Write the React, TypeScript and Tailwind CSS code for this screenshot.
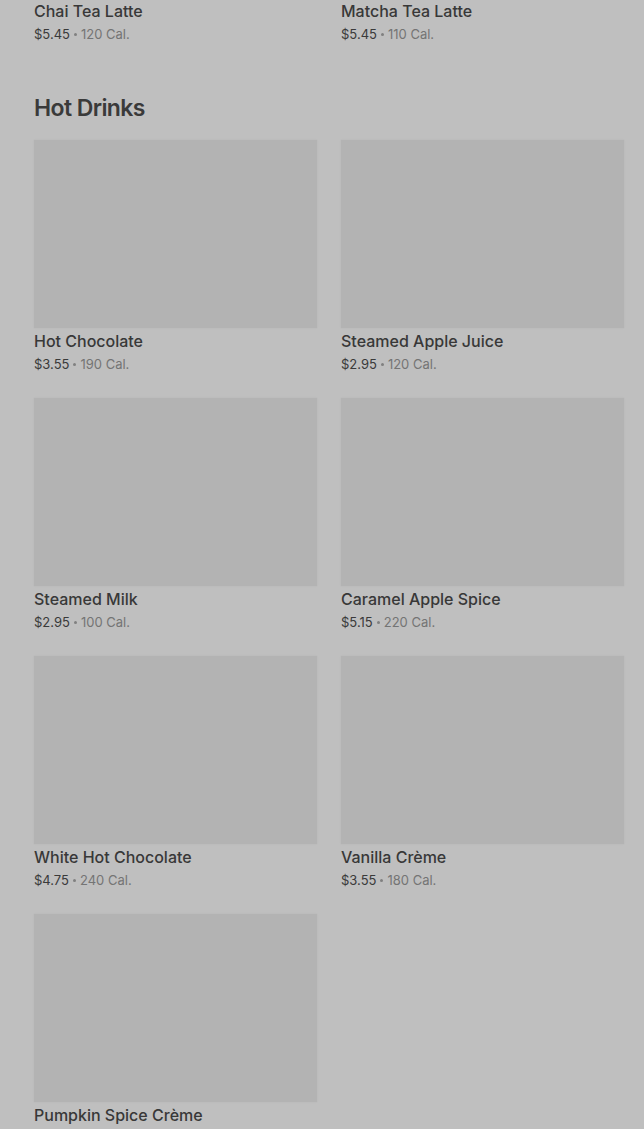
type Drink = {
  name: string;
  price: string;
  calories: number;
};

const previous: Drink[] = [
  { name: "Chai Tea Latte", price: "$5.45", calories: 120 },
  { name: "Matcha Tea Latte", price: "$5.45", calories: 110 },
];

const hotDrinks: Drink[] = [
  { name: "Hot Chocolate", price: "$3.55", calories: 190 },
  { name: "Steamed Apple Juice", price: "$2.95", calories: 120 },
  { name: "Steamed Milk", price: "$2.95", calories: 100 },
  { name: "Caramel Apple Spice", price: "$5.15", calories: 220 },
  { name: "White Hot Chocolate", price: "$4.75", calories: 240 },
  { name: "Vanilla Crème", price: "$3.55", calories: 180 },
  { name: "Pumpkin Spice Crème", price: "$4.25", calories: 310 },
];

function DrinkInfo({ drink, className = "" }: { drink: Drink; className?: string }) {
  return (
    <div className={className}>
      <p className="text-[16px] leading-5 font-medium text-[#383838] truncate">
        {drink.name}
      </p>
      <p className="mt-1 flex h-[18px] items-center text-[13px] leading-[18px] text-[#3a3a3a]">
        <span>{drink.price}</span>
        <span className="mx-[4px] inline-block h-[3px] w-[3px] rounded-full bg-[#808080]" />
        <span className="text-[#747474]">{drink.calories} Cal.</span>
      </p>
    </div>
  );
}

function DrinkCard({ drink }: { drink: Drink }) {
  return (
    <div className="pb-[25px]">
      <div className="h-[188px] bg-[#b3b3b3] shadow-[0_0_2px_rgba(0,0,0,0.06)]" />
      <DrinkInfo drink={drink} className="pt-[3px]" />
    </div>
  );
}

export default function App() {
  return (
    <div
      className="min-h-[1129px] bg-[#bfbfbf] pl-[34px] pr-[20px] overflow-hidden"
      style={{ fontFamily: "Inter, 'Noto Sans', sans-serif" }}
    >
      <div className="grid grid-cols-2 gap-x-6">
        {previous.map((d) => (
          <DrinkInfo key={d.name} drink={d} className="pt-[1px]" />
        ))}
      </div>
      <h2 className="mt-[49px] mb-[16px] text-[23px] leading-8 font-semibold tracking-[-0.6px] text-[#3a3a3a]">
        Hot Drinks
      </h2>
      <div className="grid grid-cols-2 gap-x-6">
        {hotDrinks.map((d) => (
          <DrinkCard key={d.name} drink={d} />
        ))}
      </div>
    </div>
  );
}
